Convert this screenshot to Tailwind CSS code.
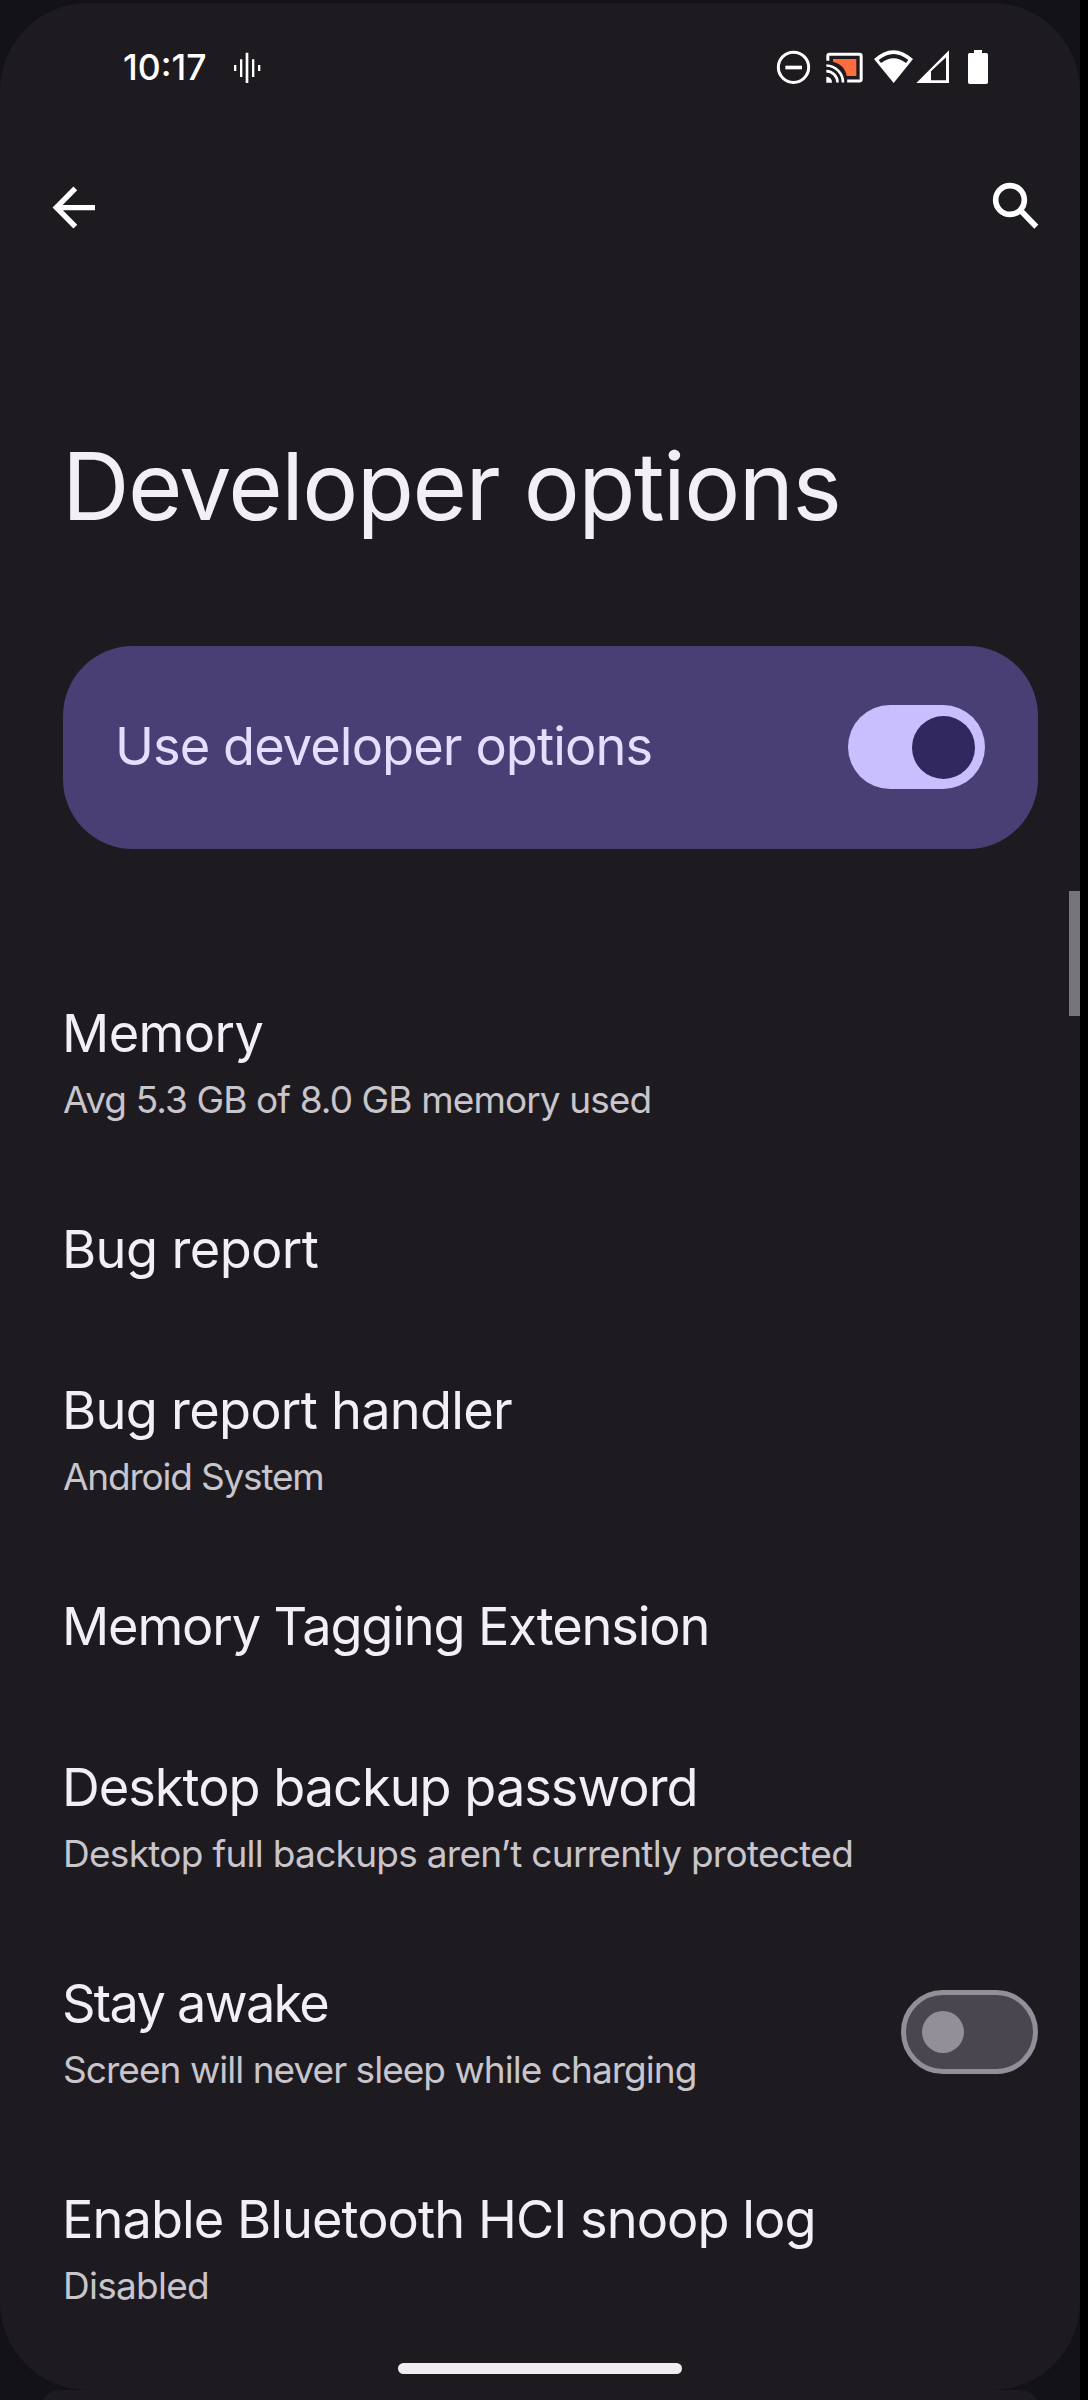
<!DOCTYPE html>
<html lang="en">
<head>
<meta charset="utf-8">
<title>Developer options</title>
<script src="https://cdn.jsdelivr.net/npm/@tailwindcss/browser@4"></script>
</head>
<body class="bg-black font-['Inter',sans-serif] text-[#f3eff5]">
<div class="relative flex h-[2400px] w-[1080px] flex-col overflow-hidden bg-[#131217] pt-[3px]">
  <main class="flex h-[2387px] shrink-0 flex-col rounded-[88px] bg-[#1d1b20]">

    <!-- Status bar -->
    <div class="mt-[44px] flex h-[41px] items-center pl-[123px] pr-[91px] text-white">
      <span class="w-[109px] text-[35.5px] leading-[40px] font-[550]">10:17</span>
      <svg class="h-[35px] w-[30px]" viewBox="696 150 90 105" fill="currentColor">
        <path d="M702 195h7v18h-7zM720 178h7v53h-7zM737 158h8v91h-8zM756 178h7v53h-7zM774 195h7v18h-7z"/>
      </svg>
      <div class="ml-auto flex items-center">
        <svg class="h-[35px] w-[35px]" viewBox="108 150 105 105" fill="none" stroke="currentColor">
          <circle cx="160.500" cy="202" r="45.500" stroke-width="9"/>
          <path d="M136 202.500h50" stroke-width="11"/>
        </svg>
        <svg class="ml-[14px] h-[35px] w-[39px]" viewBox="255 150 117 105" fill="none" stroke="currentColor">
          <path d="M279 177h70v51h-29c-3-23-18-37-41-43z" fill="#ff6d3f" stroke="none"/>
          <path d="M263.500 182v-14q0-5 5-5h90q5 0 5 5v70q0 5-5 5h-37" stroke-width="9"/>
          <path d="M259 196.500a51 51 0 0 1 50 51M259 213.500a34 34 0 0 1 33.500 34" stroke-width="8"/>
          <path d="M259 230q17 1 17 18h-17z" fill="currentColor" stroke="none"/>
        </svg>
        <svg class="ml-[10px] h-[35px] w-[39px]" viewBox="402 150 117 105" fill="currentColor">
          <path fill-rule="evenodd" d="M402 177Q460 124 519 177L461 249ZM416 180l7 9q38-28 75 0l7-9q-44-36-89 0z"/>
        </svg>
        <svg class="ml-[3px] h-[35px] w-[34px]" viewBox="528 150 102 105" fill="currentColor">
          <path fill-rule="evenodd" d="M529 249L627 151V249ZM573 214V241H618V172Z"/>
        </svg>
        <svg class="ml-[17px] h-[35px] w-[22px]" viewBox="681 150 66 105" fill="currentColor">
          <path d="M702 150h24v9h13q5 0 5 5v83q0 5-5 5h-50q-5 0-5-5v-83q0-5 5-5h13z"/>
        </svg>
      </div>
    </div>

    <!-- App bar -->
    <header class="mt-[92px] flex h-[50px] items-center justify-between pl-[50px] pr-[40px] text-white">
      <svg class="mt-[5px] h-[45px] w-[47px]" viewBox="150 555 141 135" fill="none" stroke="currentColor" stroke-width="16">
        <path d="M285 623H172M226 565L169 622.500L226 680"/>
      </svg>
      <svg class="h-[50px] w-[50px]" viewBox="750 540 150 150" fill="none" stroke="currentColor">
        <circle cx="810" cy="600" r="43" stroke-width="17"/>
        <path d="M841 631L889 680" stroke-width="17"/>
      </svg>
    </header>

    <h1 class="mt-[206px] pl-[62px] text-[93.5px] leading-[100px] tracking-[-1.55px] whitespace-nowrap">Developer options</h1>

    <!-- Main switch -->
    <div class="mt-[110px] ml-[63px] flex h-[203px] w-[975px] shrink-0 items-center justify-between rounded-[70px] bg-[#493f75] pl-[52px] pr-[53px]">
      <span class="pb-[3px] text-[52.3px] leading-[64px] tracking-[-0.9px] text-[#e6deff]">Use developer options</span>
      <span class="mb-px flex h-[84px] w-[137px] items-center justify-end rounded-full bg-[#c9bfff] pr-[10px]">
        <span class="size-[63px] rounded-full bg-[#31285f]"></span>
      </span>
    </div>

    <!-- Preferences -->
    <ul class="mt-[145px] flex flex-col pl-[62px] pr-[42px] text-[52.3px] leading-[79px] whitespace-nowrap">
      <li class="mb-[82px]">
        <p class="tracking-[-0.6px]">Memory</p>
        <p class="-mt-px mb-px pl-px text-[37px] leading-[55px] tracking-[-0.89px] text-[#c9c5cd]">Avg 5.3 GB of 8.0 GB memory used</p>
      </li>
      <li class="mb-[82px]">
        <p class="tracking-[-0.6px]">Bug report</p>
      </li>
      <li class="mb-[82px]">
        <p class="tracking-[-0.72px]">Bug report handler</p>
        <p class="-mt-px mb-px pl-px text-[37px] leading-[55px] tracking-[-1.2px] text-[#c9c5cd]">Android System</p>
      </li>
      <li class="mb-[82px]">
        <p class="tracking-[-1.15px]">Memory Tagging Extension</p>
      </li>
      <li class="mb-[82px]">
        <p class="tracking-[-1px]">Desktop backup password</p>
        <p class="-mt-px mb-px pl-px text-[37px] leading-[55px] tracking-[-0.71px] text-[#c9c5cd]">Desktop full backups aren’t currently protected</p>
      </li>
      <li class="mb-[82px] flex items-center justify-between">
        <div>
          <p class="tracking-[-1.7px]">Stay awake</p>
          <p class="-mt-px mb-px pl-px text-[37px] leading-[55px] tracking-[-0.96px] text-[#c9c5cd]">Screen will never sleep while charging</p>
        </div>
        <span class="mt-[2px] flex h-[84px] w-[137px] items-center rounded-full border-[5px] border-[#938f98] bg-[#49464f] pl-[16px]">
          <span class="size-[42px] rounded-full bg-[#938f98]"></span>
        </span>
      </li>
      <li>
        <p class="tracking-[-0.94px]">Enable Bluetooth HCI snoop log</p>
        <p class="-mt-px mb-px pl-px text-[37px] leading-[55px] tracking-[-0.74px] text-[#c9c5cd]">Disabled</p>
      </li>
    </ul>
  </main>

  <!-- Edge of the surface below -->
  <div class="mx-[40px] h-[20px] shrink-0 rounded-t-[20px] bg-[#1d1b20]"></div>

  <!-- Gesture handle and scroll thumb -->
  <div class="absolute top-[2363px] left-[398px] h-[11px] w-[284px] rounded-full bg-[#eeedef]"></div>
  <div class="absolute top-[891px] right-0 h-[125px] w-[11px] bg-[#78757a]"></div>
</div>
</body>
</html>
